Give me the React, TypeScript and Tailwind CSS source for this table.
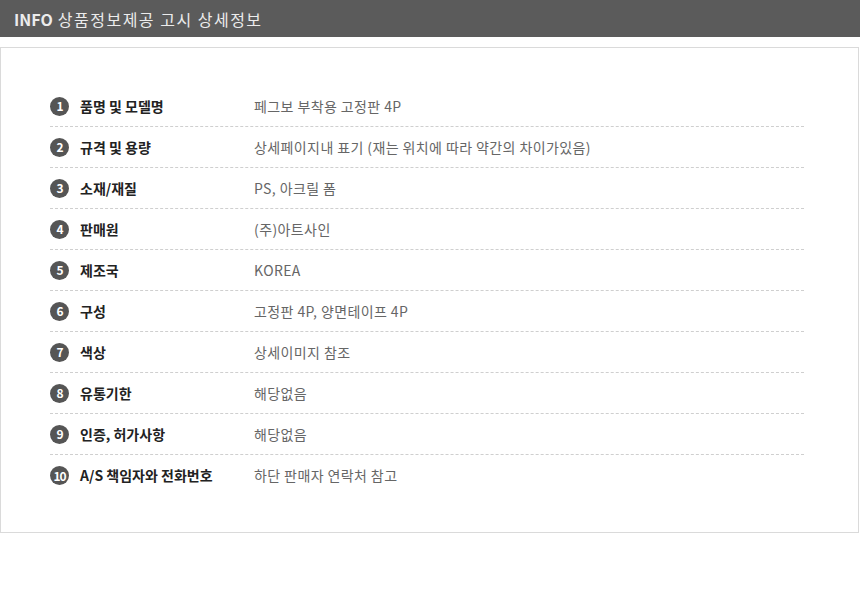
const rows: [string, string][] = [
  ["품명 및 모델명", "페그보 부착용 고정판 4P"],
  ["규격 및 용량", "상세페이지내 표기 (재는 위치에 따라 약간의 차이가있음)"],
  ["소재/재질", "PS, 아크릴 폼"],
  ["판매원", "(주)아트사인"],
  ["제조국", "KOREA"],
  ["구성", "고정판 4P, 양면테이프 4P"],
  ["색상", "상세이미지 참조"],
  ["유통기한", "해당없음"],
  ["인증, 허가사항", "해당없음"],
  ["A/S 책임자와 전화번호", "하단 판매자 연락처 참고"],
]

export default function App() {
  return (
    <div
      className="w-[860px] h-[593px] bg-white"
      style={{ fontFamily: '"Noto Sans CJK KR", "Noto Sans", sans-serif' }}
    >
      <div className="h-[37px] bg-[#5b5b5b] flex items-center pl-[14px] text-[16px] text-[#ececec] tracking-[1.5px]">
        <span className="font-bold mr-[5px] tracking-[0px]">INFO</span>
        <span>상품정보제공 고시 상세정보</span>
      </div>
      <div className="mt-[10px] w-[859px] border border-[#dadada] pl-[49px] pr-[54px] pt-[38px] pb-[36px]">
        {rows.map(([label, value], i) => (
          <div
            key={i}
            className={
              "h-[41px] flex items-center " +
              (i < rows.length - 1 ? "border-b border-dashed border-[#cfcfcf]" : "")
            }
          >
            <span className="w-[19px] h-[19px] rounded-full bg-[#555] text-white text-[12px] font-bold flex items-center justify-center leading-none tracking-[-1px]">
              {i + 1}
            </span>
            <span className="ml-[11px] w-[174px] text-[14px] font-bold text-[#222]">
              {label}
            </span>
            <span className="text-[14px] text-[#666] tracking-[0.4px]">{value}</span>
          </div>
        ))}
      </div>
    </div>
  )
}
